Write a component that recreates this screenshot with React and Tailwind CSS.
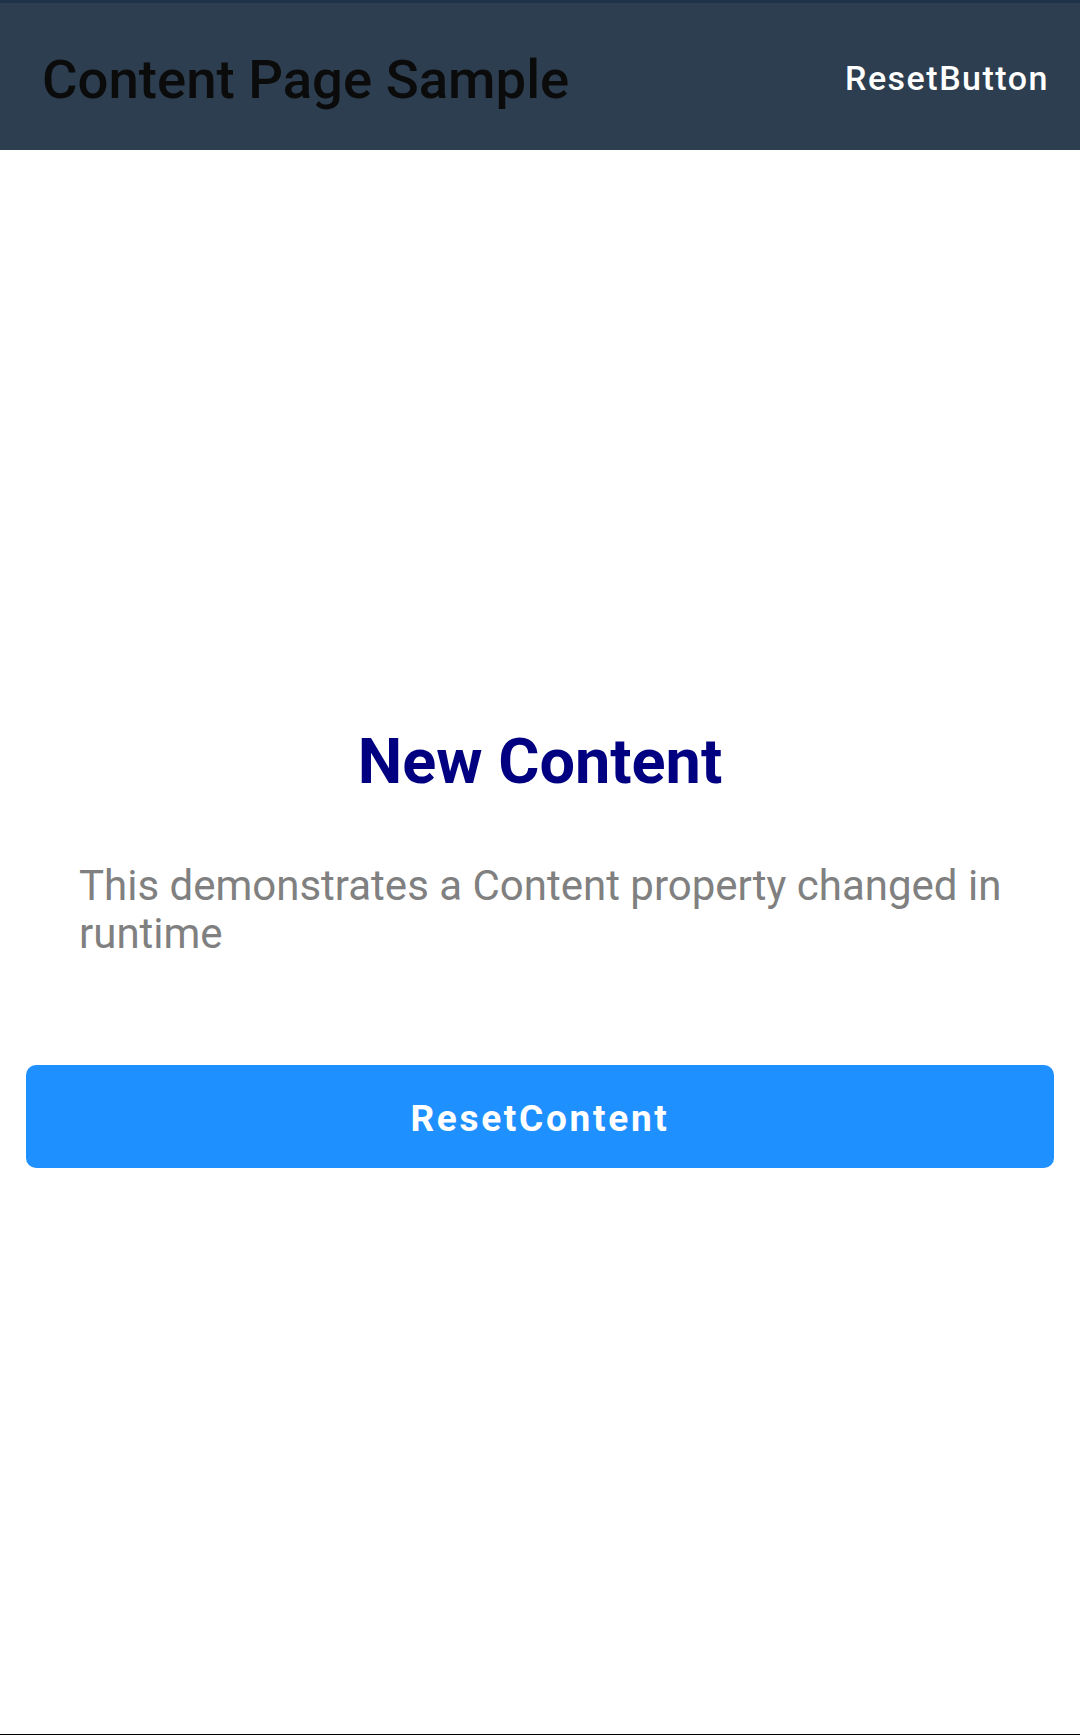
import React from "react";

export default function App() {
  return (
    <div className="flex flex-col h-[1735px] w-full bg-white border-b border-black font-['Roboto',sans-serif]">
      <div className="h-[3px] bg-[#1e3348]" />
      <header className="flex items-center justify-between h-[147px] bg-[#2d3e50] pl-[42px] pr-[31px]">
        <h1 className="text-[54.5px] leading-none font-medium text-[#0b0b0c] mt-[6px]">Content Page Sample</h1>
        <button className="text-[34px] leading-none font-medium tracking-[1.5px] text-white mt-[2px]">ResetButton</button>
      </header>
      <main className="flex flex-col pt-[580px]">
        <h2 className="text-[63px] leading-none font-bold text-[#000080] text-center">New Content</h2>
        <p className="mt-[69px] pl-[79px] pr-[40px] text-[42px] leading-[48px] text-[#808080]">
          This demonstrates a Content property changed in runtime
        </p>
        <div className="px-[26px] mt-[107px]">
          <button className="w-full h-[103px] pt-[4px] rounded-[10px] bg-[#1e90ff] text-white text-[37px] font-bold tracking-[2.7px]">
            ResetContent
          </button>
        </div>
      </main>
    </div>
  );
}
